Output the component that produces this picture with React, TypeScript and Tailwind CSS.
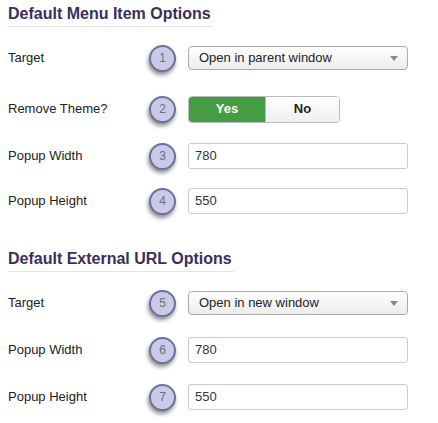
import React from 'react'

function Badge({ n }: { n: number }) {
  return (
    <div className="w-[27px] h-[27px] rounded-full border-2 border-[#6f6f9c] bg-[#c9c9e8] shadow-[-1px_3px_4px_rgba(0,0,0,0.45)] flex items-center justify-center text-[12px] text-[#6d6d88]">
      {n}
    </div>
  )
}

function Heading({ children }: { children: React.ReactNode }) {
  return (
    <div className="w-fit pr-[2px] border-b border-[#e5e5e5] pb-[2px] text-[16px] leading-[20px] font-bold text-[#3b2d5c]">
      {children}
    </div>
  )
}

function Row({ label, n, className, children }: { label: string; n: number; className: string; children: React.ReactNode }) {
  return (
    <div className={`flex items-center h-[26px] ${className}`}>
      <div className="w-[141px] text-[13px] text-[#222]">{label}</div>
      <Badge n={n} />
      <div className="ml-[12px]">{children}</div>
    </div>
  )
}

function Select({ value }: { value: string }) {
  return (
    <div className="w-[220px] h-[24px] rounded-[4px] border border-[#aaa] bg-gradient-to-b from-white to-[#ececec] flex items-center justify-between pl-[10px] pr-[9px] text-[13px] text-[#222]">
      <span>{value}</span>
      <span className="w-0 h-0 border-l-[4px] border-r-[4px] border-t-[5px] border-l-transparent border-r-transparent border-t-[#888]" />
    </div>
  )
}

function Input({ value }: { value: string }) {
  return (
    <div className="w-[220px] h-[26px] rounded-[3px] border border-[#ccc] bg-white flex items-center pl-[6px] text-[13px] text-[#333]">
      {value}
    </div>
  )
}

export default function App() {
  return (
    <div className="w-[438px] h-[423px] bg-white px-[8px] pt-[4px] font-['Liberation_Sans',Arial,sans-serif]">
      <Heading>Default Menu Item Options</Heading>
      <Row label="Target" n={1} className="mt-[18px]">
        <Select value="Open in parent window" />
      </Row>
      <Row label="Remove Theme?" n={2} className="mt-[25px]">
        <div className="flex h-[27px] rounded-[4px] border border-[#bbb] overflow-hidden text-[13px] font-bold">
          <div className="w-[76px] bg-[#449d44] text-white flex items-center justify-center">Yes</div>
          <div className="w-[74px] bg-gradient-to-b from-white to-[#efefef] text-[#222] flex items-center justify-center border-l border-[#bbb]">No</div>
        </div>
      </Row>
      <Row label="Popup Width" n={3} className="mt-[21px]">
        <Input value="780" />
      </Row>
      <Row label="Popup Height" n={4} className="mt-[19px]">
        <Input value="550" />
      </Row>
      <div className="mt-[35px]">
        <Heading>Default External URL Options</Heading>
      </div>
      <Row label="Target" n={5} className="mt-[18px]">
        <Select value="Open in new window" />
      </Row>
      <Row label="Popup Width" n={6} className="mt-[21px]">
        <Input value="780" />
      </Row>
      <Row label="Popup Height" n={7} className="mt-[21px]">
        <Input value="550" />
      </Row>
    </div>
  )
}
